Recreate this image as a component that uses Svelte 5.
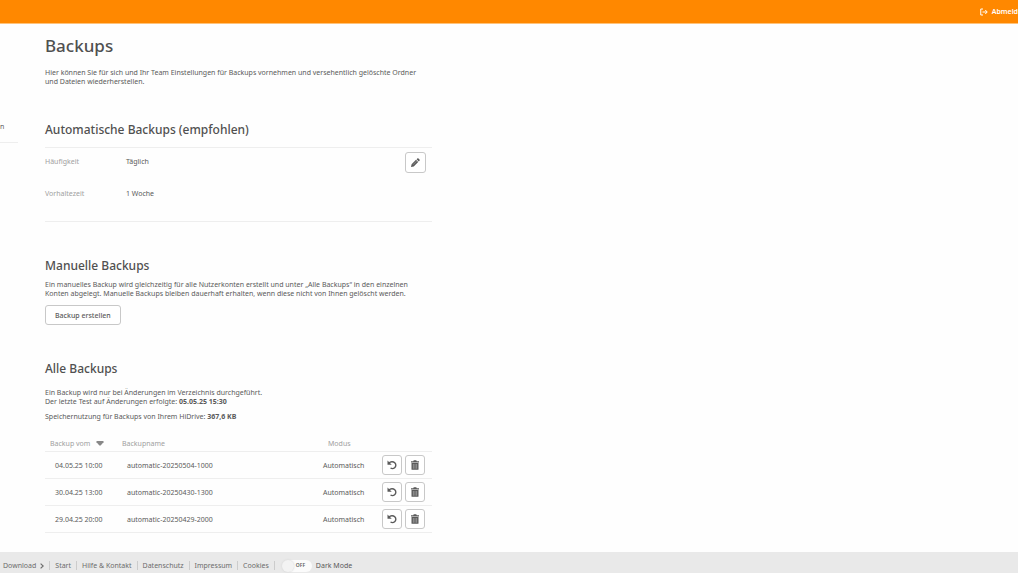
<script lang="ts">
  interface Backup {
    date: string;
    name: string;
    mode: string;
  }

  const backups: Backup[] = [
    { date: "04.05.25 10:00", name: "automatic-20250504-1000", mode: "Automatisch" },
    { date: "30.04.25 13:00", name: "automatic-20250430-1300", mode: "Automatisch" },
    { date: "29.04.25 20:00", name: "automatic-20250429-2000", mode: "Automatisch" },
  ];
  const links = ["Start", "Hilfe & Kontakt", "Datenschutz", "Impressum", "Cookies"];

  let darkMode = $state(false);
</script>

<div class="page">
  <header>
    <a class="logout" href="#logout">
      <svg width="8" height="8" viewBox="0 0 16 16" fill="none" stroke="currentColor" stroke-width="2" aria-hidden="true">
        <path d="M6 2H1.5v12H6M5 8h9M10.5 4l4 4-4 4" />
      </svg>
      Abmeld
    </a>
  </header>

  <div class="layout">
    <nav class="sidebar">
      <a href="#konten">n</a>
    </nav>

    <main>
      <h1>Backups</h1>
      <p class="intro">
        Hier können Sie für sich und Ihr Team Einstellungen für Backups vornehmen und versehentlich gelöschte Ordner<br />
        und Dateien wiederherstellen.
      </p>

      <section class="automatic">
        <h2>Automatische Backups (empfohlen)</h2>
        <div class="settings">
          <dl>
            <dt>Häufigkeit</dt>
            <dd>Täglich</dd>
            <dt>Vorhaltezeit</dt>
            <dd>1 Woche</dd>
          </dl>
          <button class="icon-button" aria-label="Bearbeiten">
            <svg width="11" height="11" viewBox="0 0 22 22" aria-hidden="true">
              <path d="M2 20l1.2-5.500L12 5.700l4.300 4.300-8.800 8.800zM13.200 4.500l1.500-1.500c.7-.7 1.500-.7 2.200 0l2.100 2.100c.7.7.7 1.500 0 2.200l-1.500 1.500z" fill="currentColor" />
              <path d="M6 15.500l7.500-7.500" stroke="#bbb" stroke-width="1" />
            </svg>
          </button>
        </div>
      </section>

      <section class="manual">
        <h2>Manuelle Backups</h2>
        <p>
          Ein manuelles Backup wird gleichzeitig für alle Nutzerkonten erstellt und unter „Alle Backups“ in den einzelnen<br />
          Konten abgelegt. Manuelle Backups bleiben dauerhaft erhalten, wenn diese nicht von Ihnen gelöscht werden.
        </p>
        <button class="create">Backup erstellen</button>
      </section>

      <section class="all">
        <h2>Alle Backups</h2>
        <p>
          Ein Backup wird nur bei Änderungen im Verzeichnis durchgeführt.<br />
          Der letzte Test auf Änderungen erfolgte: <strong>05.05.25 15:30</strong>
        </p>
        <p class="usage">Speichernutzung für Backups von Ihrem HiDrive: <strong>367,6 KB</strong></p>

        <table>
          <thead>
            <tr>
              <th class="date">
                Backup vom
                <svg width="8" height="5" viewBox="0 0 8 5" aria-hidden="true">
                  <path d="M0.5 0h7v1.2L4.6 4.6h-1.2L0.5 1.2z" fill="#888" />
                </svg>
              </th>
              <th class="name">Backupname</th>
              <th class="mode">Modus</th>
              <th class="actions"></th>
            </tr>
          </thead>
          <tbody>
            {#each backups as backup (backup.name)}
              <tr>
                <td class="date">{backup.date}</td>
                <td class="name">{backup.name}</td>
                <td class="mode">{backup.mode}</td>
                <td class="actions">
                  <div class="buttons">
                    <button class="icon-button" aria-label="Wiederherstellen">
                      <svg width="10" height="10" viewBox="0 0 20 20" fill="none" stroke="currentColor" aria-hidden="true">
                        <path d="M4 6C7 3 12.500 2.800 15.500 5.500c3 2.900 2.800 7.500-.2 10C12.800 17.500 9.500 17.500 7 16" stroke-width="2.800" />
                        <path d="M1 1v8.500h8.500z" fill="currentColor" stroke="none" />
                      </svg>
                    </button>
                    <button class="icon-button" aria-label="Löschen">
                      <svg width="10" height="10" viewBox="0 0 20 20" fill="currentColor" aria-hidden="true">
                        <path d="M2 2.500h4.500l1-2h5l1 2H18V5H2z" />
                        <path d="M3 6h14v12.500a1.200 1.200 0 0 1-1.200 1.200H4.200a1.200 1.200 0 0 1-1.200-1.200z" />
                        <path d="M6.700 8v9.500M10 8v9.500M13.300 8v9.500" stroke="#bbb" stroke-width="1.200" />
                      </svg>
                    </button>
                  </div>
                </td>
              </tr>
            {/each}
          </tbody>
        </table>
      </section>
    </main>
  </div>

  <footer>
    <a class="download" href="#download">
      Download
      <svg width="4" height="6" viewBox="0 0 4 6" fill="none" stroke="currentColor" stroke-width="1.2" aria-hidden="true">
        <path d="M0.6 0.6L3.200 3 0.6 5.400" />
      </svg>
    </a>
    {#each links as link}
      <a href="#{link}">{link}</a>
    {/each}
    <label class="dark-mode">
      <input type="checkbox" bind:checked={darkMode} />
      <span class="switch" class:on={darkMode}>
        <span class="knob"></span>
        <span class="state">{darkMode ? "ON" : "OFF"}</span>
      </span>
      Dark Mode
    </label>
  </footer>
</div>

<style>
  :global(body) {
    margin: 0;
    background: #fefefe;
  }
  .page {
    display: flex;
    flex-direction: column;
    min-height: 100vh;
    overflow: hidden;
    font-family: "Noto Sans", "Open Sans", sans-serif;
    font-size: 7px;
    line-height: 9px;
    color: #5a5a5a;
  }
  header {
    display: flex;
    justify-content: flex-end;
    align-items: center;
    height: 24px;
    background: #ff8800;
    border-bottom: 1px solid #ffc37a;
    box-sizing: border-box;
  }
  a {
    color: inherit;
    text-decoration: none;
  }
  .logout {
    display: flex;
    align-items: center;
    gap: 4px;
    color: #fff;
    font-weight: 600;
  }
  .layout {
    display: flex;
    flex: 1;
    gap: 27px;
  }
  .sidebar {
    width: 18px;
    padding-top: 98px;
  }
  .sidebar a {
    display: block;
    height: 20px;
    border-bottom: 1px solid #eee;
  }
  main {
    flex: 1;
    max-width: 387px;
    padding: 10px 0 19px;
  }
  h1,
  h2,
  p,
  dl,
  dd {
    margin: 0;
  }
  p {
    white-space: nowrap;
  }
  h1,
  h2 {
    font-weight: 500;
    color: #505050;
  }
  h1 {
    font-size: 17px;
    line-height: 24px;
  }
  h2 {
    font-size: 12px;
    line-height: 18px;
  }
  .intro {
    margin-top: 10px;
  }
  section {
    margin-top: 35px;
  }
  .settings {
    display: flex;
    justify-content: space-between;
    align-items: flex-start;
    margin-top: 8px;
    padding: 4px 6px 23px 0;
    border: solid #eee;
    border-width: 1px 0;
  }
  dl {
    display: grid;
    grid-template-columns: 81px auto;
    row-gap: 23px;
    padding-top: 5px;
  }
  dt {
    color: #a0a0a0;
  }
  button {
    padding: 0;
    font: inherit;
    color: #5a5a5a;
    background: #fff;
    border: 1px solid #c8c8c8;
    border-radius: 3px;
    cursor: pointer;
  }
  .icon-button {
    display: grid;
    place-items: center;
    width: 21px;
    height: 21px;
  }
  .manual p {
    margin-top: 5px;
  }
  .create {
    margin-top: 7px;
    height: 20px;
    padding: 0 9px;
    font-weight: 500;
  }
  .all p {
    margin-top: 10px;
  }
  .all .usage {
    margin-top: 6px;
  }
  strong {
    font-weight: 700;
  }
  table {
    width: 100%;
    margin-top: 14px;
    border-collapse: collapse;
    table-layout: fixed;
  }
  th,
  td {
    height: 26px;
    padding: 0;
    border-bottom: 1px solid #eee;
    text-align: left;
    font-weight: 400;
  }
  th {
    height: 16px;
    color: #a0a0a0;
  }
  .date {
    width: 67px;
    padding-left: 10px;
  }
  th.date {
    padding-left: 5px;
    width: 72px;
  }
  th svg {
    margin-left: 4px;
  }
  td.name {
    padding-left: 5px;
  }
  th.mode {
    padding-left: 5px;
    width: 54px;
  }
  .actions {
    width: 50px;
  }
  .buttons {
    display: flex;
    gap: 3px;
  }
  .buttons .icon-button {
    width: 20px;
    height: 20px;
  }
  footer {
    display: flex;
    align-items: center;
    height: 21px;
    padding: 6px 0 0 3px;
    background: #e9e9e9;
    box-sizing: border-box;
    color: #6c6c6c;
    white-space: nowrap;
  }
  footer a {
    padding: 0 5px;
    border-right: 1px solid #ccc;
  }
  footer .download {
    display: flex;
    align-items: center;
    gap: 4px;
    padding-left: 0;
  }
  .dark-mode {
    display: flex;
    align-items: center;
    gap: 4px;
    margin-left: 7px;
    color: #5a5a5a;
  }
  .dark-mode input {
    position: absolute;
    opacity: 0;
    margin: 0;
  }
  .switch {
    display: flex;
    align-items: center;
    gap: 2px;
    width: 30px;
    height: 12px;
    border-radius: 6px;
    background: #fbfbfb;
  }
  .switch.on {
    flex-direction: row-reverse;
  }
  .knob {
    width: 12px;
    height: 12px;
    border-radius: 50%;
    background: #f3f3f3;
    box-shadow: 0 0 2px #ccc;
  }
  .state {
    font-size: 5px;
    font-weight: 600;
  }
</style>
